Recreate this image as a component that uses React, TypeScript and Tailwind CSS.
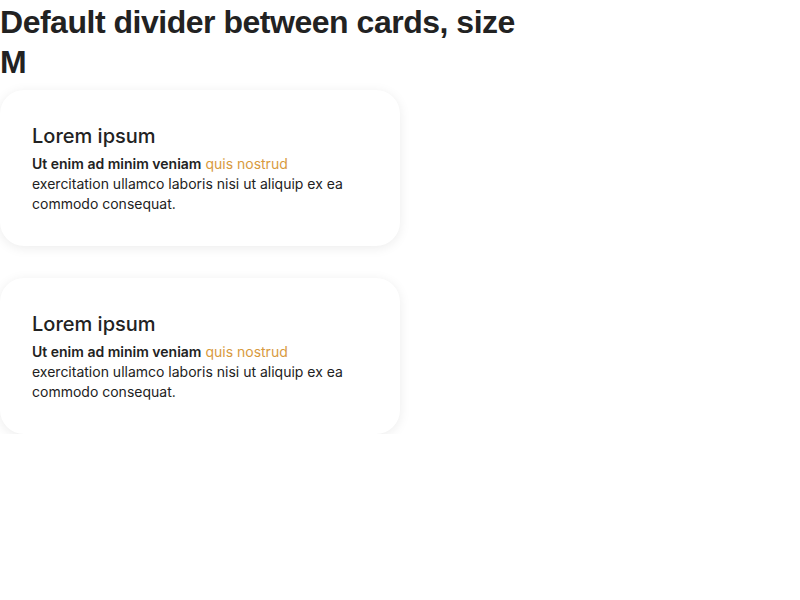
import React from "react";

const cards = [1, 2];

const Card: React.FC = () => (
  <div className="w-[400px] rounded-[24px] bg-white px-8 py-8 shadow-[0_2px_12px_rgba(0,0,0,0.08)]">
    <h3 className="text-[20px] leading-[28px] font-medium text-[#222]">Lorem ipsum</h3>
    <p className="mt-1 text-[14px] leading-[20px] text-[#222]">
      <b className="font-semibold">Ut enim ad minim veniam</b>{" "}
      <a href="#" className="text-[#d89a3e]">
        quis nostrud
      </a>{" "}
      exercitation ullamco laboris nisi ut aliquip ex ea commodo consequat.
    </p>
  </div>
);

const App: React.FC = () => {
  return (
    <div className="font-['Inter','Liberation_Sans',Arial,sans-serif] text-[#222]">
      <h2 className="max-w-[540px] pt-[2px] font-['Liberation_Sans',Arial,sans-serif] text-[32px] leading-[40px] font-bold tracking-[-0.015em] mb-[8px]">
        Default divider between cards, size M
      </h2>
      <div className="flex flex-col gap-8">
        {cards.map((c) => (
          <Card key={c} />
        ))}
      </div>
    </div>
  );
};

export default App;
